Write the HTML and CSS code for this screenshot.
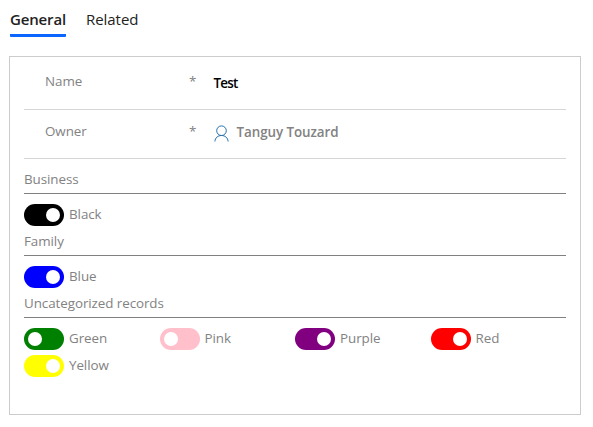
FILE: index.html
```html
<!DOCTYPE html>
<html lang="en">
<head>
<meta charset="utf-8">
<title>Test</title>
<link rel="stylesheet" href="styles.css">
</head>
<body>
<nav class="tabs">
  <a class="tab active">General</a>
  <a class="tab">Related</a>
</nav>
<main class="card">
  <div class="field name">
    <span class="label">Name</span><span class="req">*</span><span class="value">Test</span>
  </div>
  <div class="field owner">
    <span class="label">Owner</span><span class="req">*</span>
    <span class="value lookup">
      <svg class="person" viewBox="0 0 16 17"><circle cx="7.5" cy="5.7" r="4.8"/><path d="M.9 16.5C1.1 12.9 3.8 10.5 7.5 10.5S13.9 12.9 14.1 16.5"/></svg>
      <span>Tanguy Touzard</span>
    </span>
  </div>
  <section class="groups">
    <h2>Business</h2>
    <div class="options">
      <label class="option"><i class="toggle on black"></i><span>Black</span></label>
    </div>
    <h2>Family</h2>
    <div class="options">
      <label class="option"><i class="toggle on blue"></i><span>Blue</span></label>
    </div>
    <h2>Uncategorized records</h2>
    <div class="options">
      <label class="option"><i class="toggle green"></i><span>Green</span></label>
      <label class="option"><i class="toggle pink"></i><span>Pink</span></label>
      <label class="option"><i class="toggle on purple"></i><span>Purple</span></label>
      <label class="option"><i class="toggle on red"></i><span>Red</span></label>
      <label class="option"><i class="toggle on yellow"></i><span>Yellow</span></label>
    </div>
  </section>
</main>
</body>
</html>
```
FILE: styles.css
```css
* { box-sizing: border-box; }
body {
  margin: 0;
  background: #fff;
  color: #828282;
  font: 13.4px/18px "Open Sans", "Noto Sans", sans-serif;
  letter-spacing: -0.07px;
}
.tabs {
  display: flex;
  gap: 20px;
  height: 56px;
  padding: 9px 10px 0;
}
.tab {
  height: 28px;
  color: #222;
  font-size: 15px;
  line-height: 21px;
  letter-spacing: -0.05px;
}
.tab.active {
  width: 56px;
  white-space: nowrap;
  font-weight: 600;
  letter-spacing: -0.15px;
  border-bottom: 3px solid #0b66ff;
  border-radius: 1px;
}
.card {
  width: 572px;
  height: 359px;
  margin-left: 9px;
  padding: 0 14px;
  border: 1px solid #ccc;
}
.field {
  display: grid;
  grid-template-columns: 144px 24.5px 1fr;
  padding-left: 21px;
  border-bottom: 1px solid #d6d6d6;
}
.name { height: 53px; padding-top: 15px; }
.owner { height: 49px; padding-top: 12px; }
.value { font-weight: 600; }
.name .value { margin-top: 2px; color: #000; letter-spacing: -0.8px; }
.lookup { display: flex; gap: 7px; margin-top: 1px; }
.person {
  width: 16px;
  height: 17px;
  margin-top: 2px;
  fill: none;
  stroke: #2470ad;
  stroke-width: 1;
}
h2 {
  height: 25px;
  margin: 0;
  padding-top: 1px;
  border-bottom: 1px solid #808080;
  font: inherit;
}
.groups { padding-top: 10px; }
.options {
  display: grid;
  grid-template-columns: repeat(4, 1fr);
  row-gap: 5px;
  padding: 10px 0 5px;
}
.option { display: flex; gap: 5px; height: 22px; line-height: 20px; }
.toggle {
  display: flex;
  width: 40px;
  height: 22px;
  padding: 4px;
  border-radius: 11px;
}
.toggle::before {
  content: "";
  width: 14px;
  height: 14px;
  border-radius: 50%;
  background: #fff;
}
.on { justify-content: flex-end; }
.black { background: #000; }
.blue { background: #00f; }
.green { background: #008000; }
.pink { background: #ffc0cb; }
.purple { background: #800080; }
.red { background: #f00; }
.yellow { background: #ff0; }
```
